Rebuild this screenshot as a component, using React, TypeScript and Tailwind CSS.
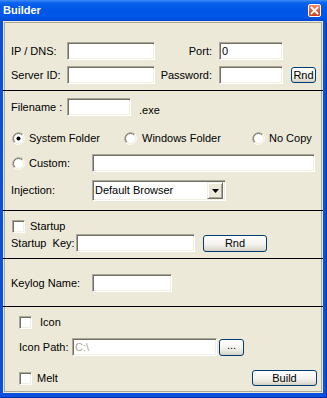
import React from 'react'

// sunken 3D edit box look (XP classic controls)
const sunken =
  'bg-white border border-t-[#ACA899] border-l-[#ACA899] border-b-white border-r-white shadow-[inset_1px_1px_0_#716F64,inset_-1px_-1px_0_#F1EFE2]'

const xpButton =
  'flex items-center justify-center border border-[#003C74] rounded-[3px] bg-[linear-gradient(to_bottom,#FFFFFF_0%,#F3F2EC_55%,#E2DFD4_85%,#D0CBBE_100%)] text-black'

function TextBox({ className = '', value, muted }: { className?: string; value?: string; muted?: boolean }) {
  return (
    <div className={`${sunken} h-[18px] flex items-center pl-[2px] ${className}`}>
      {value && <span className={muted ? 'text-[#ACA899]' : 'text-black'}>{value}</span>}
    </div>
  )
}

function Radio({ checked }: { checked?: boolean }) {
  return (
    <svg width="13" height="13" viewBox="0 0 13 13" className="shrink-0">
      <circle cx="6.5" cy="6.5" r="5" fill="#FFFFFF" />
      <path d="M2.26 10.74 A6 6 0 0 1 10.74 2.26" fill="none" stroke="#ACA899" />
      <path d="M10.74 2.26 A6 6 0 0 1 2.26 10.74" fill="none" stroke="#FFFFFF" />
      <path d="M2.96 10.04 A5 5 0 0 1 10.04 2.96" fill="none" stroke="#716F64" />
      <path d="M10.04 2.96 A5 5 0 0 1 2.96 10.04" fill="none" stroke="#F1EFE2" />
      {checked && <circle cx="6.5" cy="6.5" r="2" fill="#000000" />}
    </svg>
  )
}

function CheckBox() {
  return <span className={`${sunken} block w-[13px] h-[13px] shrink-0`} />
}

function Separator() {
  return <div className="h-px bg-black -mx-[2px] shrink-0" />
}

export default function App() {
  return (
    <div className="w-[327px] h-[398px] flex flex-col bg-[#0A50DC] shadow-[inset_0_-1px_0_#0030A8,inset_-1px_0_0_#0036B8] font-['Liberation_Sans',Arial,sans-serif] text-[11px] leading-[13px] text-black select-none">
      {/* Title bar */}
      <div className="h-[21px] shrink-0 flex items-center pl-[3px] pr-[6px] bg-[linear-gradient(to_bottom,#3D8CF7_0%,#0A62EE_14%,#0056E6_45%,#0057E8_80%,#0048D4_100%)]">
        <span className="text-white font-bold text-[11px] leading-[13px]">Builder</span>
        <div className="ml-auto w-[13px] h-[13px] rounded-[2px] border border-white bg-[linear-gradient(to_bottom,#F08A68,#DC5530_60%,#C8421E)] flex items-center justify-center">
          <svg width="9" height="9" viewBox="0 0 9 9">
            <path d="M1.5 1.5 L7.5 7.5 M7.5 1.5 L1.5 7.5" stroke="#FFFFFF" strokeWidth="1.8" strokeLinecap="square" />
          </svg>
        </div>
      </div>

      {/* Client area */}
      <div className="flex-1 ml-[3px] mr-[4px] mb-[5px] bg-[#ECE9D8] pl-[1px] pt-[1px] pr-[1px] pb-[1px] flex">
        <div className="flex-1 border border-[#ACA899] flex flex-col">
          {/* Connection */}
          <div className="h-[67px] shrink-0 pt-[19px] pl-[6px]">
            <div className="flex items-center h-[18px]">
              <span className="w-[56px]">IP / DNS:</span>
              <TextBox className="w-[88px]" />
              <span className="w-[64px] text-right pr-[7px]">Port:</span>
              <TextBox className="w-[64px]" value="0" />
            </div>
            <div className="flex items-center h-[18px] mt-[6px]">
              <span className="w-[56px]">Server ID:</span>
              <TextBox className="w-[88px]" />
              <span className="w-[64px] text-right pr-[7px]">Password:</span>
              <TextBox className="w-[64px]" />
              <button className={`${xpButton} ml-[8px] w-[25px] h-[16px] text-[11px]`}>Rnd</button>
            </div>
          </div>
          <Separator />

          {/* Install */}
          <div className="h-[119px] shrink-0 pt-[7px]">
            <div className="flex items-center h-[18px] pl-[6px]">
              <span className="w-[56px]">Filename :</span>
              <TextBox className="w-[64px]" />
              <span className="ml-[8px] translate-y-[3px]">.exe</span>
            </div>
            <div className="flex items-center h-[16px] mt-[14px] pl-[7px]">
              <div className="w-[112px] flex items-center gap-[4px]">
                <Radio checked />
                <span>System Folder</span>
              </div>
              <div className="w-[128px] flex items-center gap-[5px]">
                <Radio />
                <span>Windows Folder</span>
              </div>
              <div className="flex items-center gap-[4px]">
                <Radio />
                <span>No Copy</span>
              </div>
            </div>
            <div className="flex items-center h-[18px] mt-[8px] pl-[7px]">
              <div className="w-[80px] flex items-center gap-[4px]">
                <Radio />
                <span>Custom:</span>
              </div>
              <TextBox className="w-[223px]" />
            </div>
            <div className="flex items-center h-[21px] mt-[8px] pl-[6px]">
              <span className="w-[81px]">Injection:</span>
              <div className={`${sunken} w-[134px] h-[21px] flex items-center pl-[2px] pr-[2px]`}>
                <span className="flex-1">Default Browser</span>
                <div className="w-[16px] h-[17px] bg-[#ECE9D8] border border-t-[#F1EFE2] border-l-[#F1EFE2] border-b-[#716F64] border-r-[#716F64] shadow-[inset_1px_1px_0_#FFFFFF,inset_-1px_-1px_0_#ACA899] flex items-center justify-center">
                  <svg width="7" height="4" viewBox="0 0 7 4">
                    <path d="M0 0 H7 L3.5 4 Z" fill="#000000" />
                  </svg>
                </div>
              </div>
            </div>
          </div>
          <Separator />

          {/* Startup */}
          <div className="h-[47px] shrink-0 pt-[9px]">
            <div className="flex items-center h-[13px] pl-[7px] gap-[5px]">
              <CheckBox />
              <span>Startup</span>
            </div>
            <div className="flex items-center h-[18px] mt-[1px] pl-[6px]">
              <span className="w-[65px] whitespace-pre">Startup  Key:</span>
              <TextBox className="w-[119px]" />
              <button className={`${xpButton} ml-[8px] w-[64px] h-[17px] text-[11px]`}>Rnd</button>
            </div>
          </div>
          <Separator />

          {/* Keylogger */}
          <div className="h-[47px] shrink-0 pt-[15px] pl-[6px]">
            <div className="flex items-center h-[18px]">
              <span className="w-[81px]">Keylog Name:</span>
              <TextBox className="w-[80px]" />
            </div>
          </div>
          <Separator />

          {/* Icon / build */}
          <div className="flex-1 pt-[9px] pl-[14px] pr-[4px]">
            <div className="flex items-center h-[13px] gap-[8px]">
              <CheckBox />
              <span>Icon</span>
            </div>
            <div className="flex items-center h-[18px] mt-[9px]">
              <span className="w-[53px]">Icon Path:</span>
              <TextBox className="w-[145px]" value="C:\" muted />
              <button className={`${xpButton} ml-[2px] w-[25px] h-[17px] text-[11px] pb-[3px]`}>...</button>
            </div>
            <div className="flex items-center h-[16px] mt-[14px]">
              <CheckBox />
              <span className="ml-[5px]">Melt</span>
              <button className={`${xpButton} ml-auto w-[65px] h-[16px] text-[11px]`}>Build</button>
            </div>
          </div>
        </div>
      </div>
    </div>
  )
}
